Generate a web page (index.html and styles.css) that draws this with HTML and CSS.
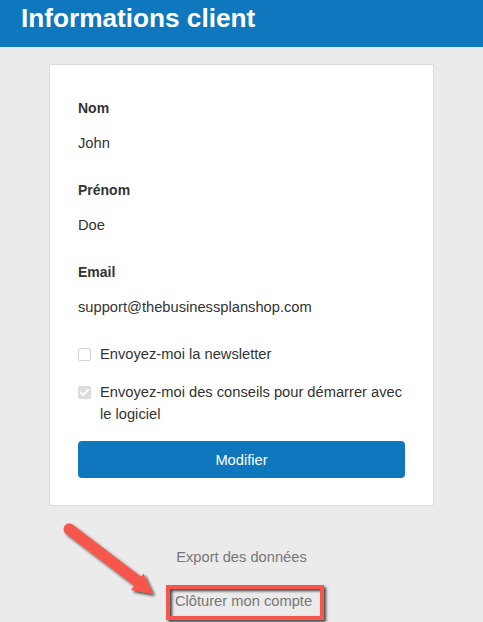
FILE: index.html
```html
<!DOCTYPE html>
<html lang="fr">
<head>
<meta charset="utf-8">
<title>Informations client</title>
<link rel="stylesheet" href="styles.css">
</head>
<body>
<header class="topbar">
  <h1 class="title">Informations client</h1>
</header>
<main class="page">
  <section class="card">
    <div class="field">
      <div class="label">Nom</div>
      <div class="value">John</div>
    </div>
    <div class="field">
      <div class="label">Prénom</div>
      <div class="value">Doe</div>
    </div>
    <div class="field field-last">
      <div class="label">Email</div>
      <div class="value">support@thebusinessplanshop.com</div>
    </div>
    <label class="check check-first">
      <span class="box"></span>
      <span class="check-text">Envoyez-moi la newsletter</span>
    </label>
    <label class="check">
      <span class="box box-checked">
        <svg viewBox="0 0 13 13" width="13" height="13"><path d="M3 6.8 L5.4 9.2 L10 3.8" fill="none" stroke="#fff" stroke-width="2" stroke-linecap="round" stroke-linejoin="round"/></svg>
      </span>
      <span class="check-text">Envoyez-moi des conseils pour démarrer avec le logiciel</span>
    </label>
    <button class="btn" type="button">Modifier</button>
  </section>
  <nav class="links">
    <a class="link" href="#">Export des données</a>
    <a class="link link-close" href="#">Clôturer mon compte</a>
  </nav>
</main>
<svg class="annot" width="483" height="622" viewBox="0 0 483 622">
  <defs>
    <filter id="sh" x="-20%" y="-20%" width="140%" height="140%">
      <feDropShadow dx="2" dy="2" stdDeviation="1.4" flood-color="#000" flood-opacity="0.75"/>
    </filter>
  </defs>
  <g filter="url(#sh)">
    <line x1="69" y1="529" x2="140" y2="583" stroke="#f6574b" stroke-width="11" stroke-linecap="round"/>
    <polygon points="153,594 143.5,573.5 131,590" fill="#f6574b"/>
  </g>
  <rect x="168" y="587" width="154" height="31" fill="none" stroke="#f6574b" stroke-width="4" filter="url(#sh)"/>
</svg>
</body>
</html>
```
FILE: styles.css
```css
html, body {
  margin: 0;
  padding: 0;
}
body {
  background: #ebebeb;
  font-family: "Liberation Sans", Arial, sans-serif;
  color: #333;
  width: 483px;
  height: 622px;
  overflow: hidden;
  position: relative;
}
.topbar {
  background: #0f77bd;
  height: 47px;
  box-sizing: border-box;
  padding: 3px 21px 0;
}
.title {
  margin: 0;
  color: #fff;
  font-size: 26.2px;
  line-height: 30px;
  font-weight: bold;
}
.page {
  display: flex;
  flex-direction: column;
  align-items: center;
  padding-top: 17px;
}
.card {
  width: 385px;
  box-sizing: border-box;
  background: #fff;
  border: 1px solid #dcdcdc;
  padding: 33px 28px 27px 28px;
  display: flex;
  flex-direction: column;
}
.field {
  display: flex;
  flex-direction: column;
  margin-bottom: 27px;
}
.field-last {
  margin-bottom: 26px;
}
.label {
  font-weight: bold;
  font-size: 14px;
  line-height: 20px;
  margin-bottom: 15px;
}
.value {
  font-size: 14.7px;
  line-height: 20px;
}
.check {
  display: flex;
  align-items: flex-start;
  gap: 9px;
  font-size: 14.7px;
  line-height: 22px;
  margin-bottom: 14px;
}
.check-first {
  margin-bottom: 16px;
}
.box {
  flex: none;
  width: 13px;
  height: 13px;
  box-sizing: border-box;
  border: 1px solid #d4d4d4;
  border-radius: 2px;
  background: #fff;
  margin-top: 5px;
  position: relative;
}
.box-checked {
  background: #dcdcdc;
  border-color: #dcdcdc;
}
.box-checked svg {
  position: absolute;
  left: -1px;
  top: -1px;
}
.check-text {
  flex: 1;
}
.btn {
  margin-top: 2px;
  height: 37px;
  border: none;
  border-radius: 4px;
  background: #0f77bd;
  color: #fff;
  font-family: "Liberation Sans", Arial, sans-serif;
  font-size: 14.7px;
  cursor: pointer;
}
.links {
  display: flex;
  flex-direction: column;
  align-items: center;
  gap: 24px;
  margin-top: 41px;
}
.link {
  color: #777;
  text-decoration: none;
  font-size: 14.7px;
  line-height: 20px;
}
.link-close {
  margin-left: 4px;
}
.annot {
  position: absolute;
  left: 0;
  top: 0;
  pointer-events: none;
}
```
